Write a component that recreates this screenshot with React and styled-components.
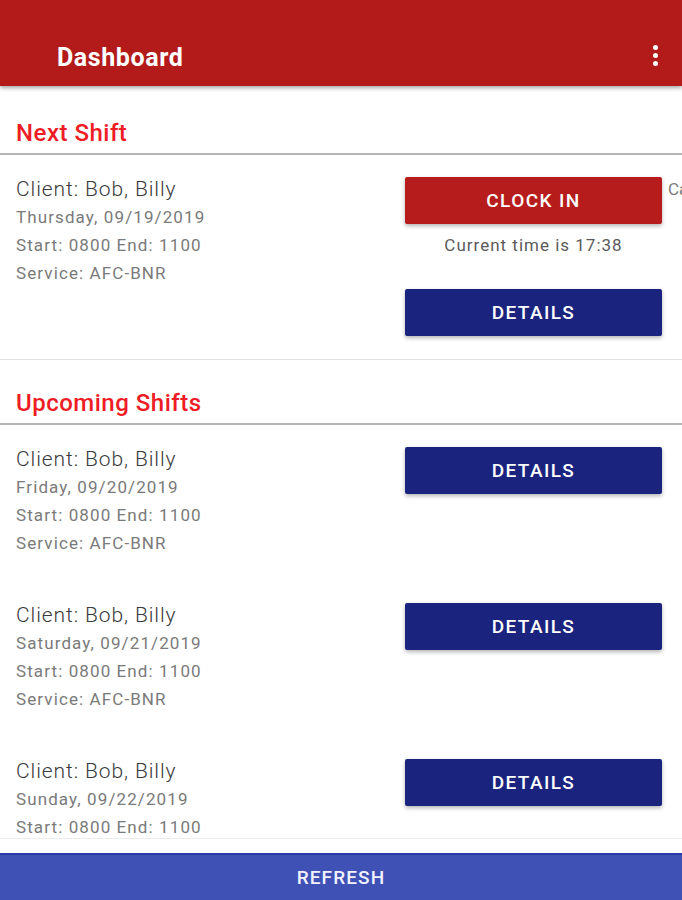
import styled, { createGlobalStyle } from 'styled-components';

const GlobalStyle = createGlobalStyle`
  html, body {
    margin: 0;
    padding: 0;
    overflow: hidden;
    background: #ffffff;
    font-family: Roboto, "Noto Sans", sans-serif;
  }
`;

const Screen = styled.div`
  width: 682px;
  height: 900px;
  display: flex;
  flex-direction: column;
  background: #fff;
`;

const AppBar = styled.header`
  height: 86px;
  flex-shrink: 0;
  box-sizing: border-box;
  padding: 28px 24px 0 57px;
  display: flex;
  align-items: center;
  justify-content: space-between;
  background: #b31b1b;
  box-shadow: 0 2px 4px rgba(0, 0, 0, 0.35);
  position: relative;
  z-index: 2;
`;

const Title = styled.h1`
  margin: 0;
  color: #fff;
  font-size: 25px;
  font-weight: 700;
  letter-spacing: 0.6px;
`;

const Kebab = styled.div`
  display: flex;
  flex-direction: column;
  gap: 3px;
  margin-top: -4px;
  span {
    width: 5px;
    height: 5px;
    border-radius: 50%;
    background: #fff;
  }
`;

const Content = styled.main`
  height: 752px;
  flex-shrink: 0;
  overflow: hidden;
  border-bottom: 1px solid #ececec;
`;

const SectionHeader = styled.h2`
  margin: 0;
  padding: ${p => p.$top}px 16px 7px;
  font-size: 24px;
  line-height: 26px;
  font-weight: 500;
  letter-spacing: 0.5px;
  color: #ee1c24;
  border-bottom: 2px solid #b5b5b5;
`;

const ShiftRow = styled.div`
  display: grid;
  grid-template-columns: 1fr 257px;
  column-gap: 20px;
  padding: 20px 20px ${p => p.$bottom}px 16px;
  border-bottom: ${p => (p.$divider ? '1px solid #e2e2e2' : 'none')};
`;

const Info = styled.div`
  display: flex;
  flex-direction: column;
`;

const ClientName = styled.div`
  font-size: 21px;
  line-height: 28px;
  font-weight: 300;
  letter-spacing: 0.9px;
  color: #3a3a3a;
`;

const Detail = styled.div`
  font-size: 17px;
  line-height: 28px;
  letter-spacing: 1.1px;
  color: #7a7a7a;
`;

const Actions = styled.div`
  position: relative;
  display: flex;
  flex-direction: column;
  padding-top: 2px;
`;

const ActionButton = styled.button`
  height: 47px;
  width: 100%;
  border: none;
  border-radius: 2px;
  background: ${p => p.$color};
  color: #fff;
  font-family: Roboto, sans-serif;
  font-size: 19px;
  font-weight: 500;
  letter-spacing: 1.4px;
  box-shadow: 0 2px 4px rgba(0, 0, 0, 0.3);
  margin-top: ${p => p.$gap || 0}px;
  cursor: pointer;
`;

const CurrentTime = styled.div`
  margin-top: 7px;
  text-align: center;
  font-size: 17px;
  line-height: 28px;
  letter-spacing: 1px;
  color: #5a5a5a;
`;

const Overflow = styled.span`
  position: absolute;
  left: calc(100% + 6px);
  top: 0;
  font-size: 17px;
  line-height: 28px;
  color: #7a7a7a;
  white-space: nowrap;
`;

const Spacer = styled.div`
  height: 14px;
  flex-shrink: 0;
`;

const RefreshBar = styled.button`
  flex: 1;
  border: none;
  border-top: 2px solid #2a3aa6;
  background: #3f51b5;
  color: #f2f2ff;
  font-family: Roboto, sans-serif;
  font-size: 19px;
  font-weight: 500;
  letter-spacing: 1.1px;
  padding: 0;
`;

const upcoming = [
  { day: 'Friday, 09/20/2019' },
  { day: 'Saturday, 09/21/2019' },
  { day: 'Sunday, 09/22/2019' },
];

function ShiftInfo({ day }) {
  return (
    <Info>
      <ClientName>Client: Bob, Billy</ClientName>
      <Detail>{day}</Detail>
      <Detail>Start: 0800 End: 1100</Detail>
      <Detail>Service: AFC-BNR</Detail>
    </Info>
  );
}

export default function App() {
  return (
    <Screen>
      <GlobalStyle />
      <AppBar>
        <Title>Dashboard</Title>
        <Kebab>
          <span />
          <span />
          <span />
        </Kebab>
      </AppBar>
      <Content>
        <SectionHeader $top={34}>Next Shift</SectionHeader>
        <ShiftRow $divider $bottom={23}>
          <ShiftInfo day="Thursday, 09/19/2019" />
          <Actions>
            <ActionButton $color="#b71c1c">CLOCK IN</ActionButton>
            <Overflow>Cancel</Overflow>
            <CurrentTime>Current time is 17:38</CurrentTime>
            <ActionButton $color="#1a237e" $gap={30}>DETAILS</ActionButton>
          </Actions>
        </ShiftRow>
        <SectionHeader $top={30}>Upcoming Shifts</SectionHeader>
        {upcoming.map(s => (
          <ShiftRow key={s.day} $bottom={24}>
            <ShiftInfo day={s.day} />
            <Actions>
              <ActionButton $color="#1a237e">DETAILS</ActionButton>
            </Actions>
          </ShiftRow>
        ))}
      </Content>
      <Spacer />
      <RefreshBar>REFRESH</RefreshBar>
    </Screen>
  );
}
